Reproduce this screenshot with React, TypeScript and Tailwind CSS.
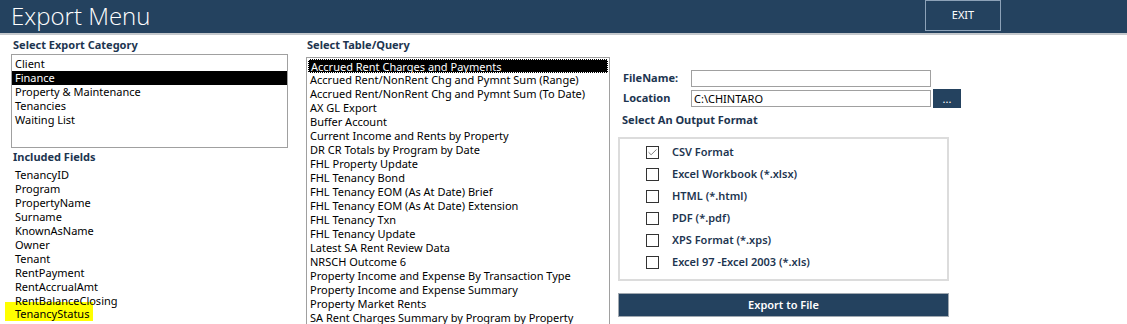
import { Check } from "lucide-react";

const categories = ["Client", "Finance", "Property & Maintenance", "Tenancies", "Waiting List"];

const fields = [
  "TenancyID",
  "Program",
  "PropertyName",
  "Surname",
  "KnownAsName",
  "Owner",
  "Tenant",
  "RentPayment",
  "RentAccrualAmt",
  "RentBalanceClosing",
];

const queries = [
  "Accrued Rent Charges and Payments",
  "Accrued Rent/NonRent Chg and Pymnt Sum (Range)",
  "Accrued Rent/NonRent Chg and Pymnt Sum (To Date)",
  "AX GL Export",
  "Buffer Account",
  "Current Income and Rents by Property",
  "DR CR Totals by Program by Date",
  "FHL Property Update",
  "FHL Tenancy Bond",
  "FHL Tenancy EOM (As At Date) Brief",
  "FHL Tenancy EOM (As At Date) Extension",
  "FHL Tenancy Txn",
  "FHL Tenancy Update",
  "Latest SA Rent Review Data",
  "NRSCH Outcome 6",
  "Property Income and Expense By Transaction Type",
  "Property Income and Expense Summary",
  "Property Market Rents",
  "SA Rent Charges Summary by Program by Property",
];

const formats = [
  { label: "CSV Format", checked: true },
  { label: "Excel Workbook (*.xlsx)", checked: false },
  { label: "HTML (*.html)", checked: false },
  { label: "PDF (*.pdf)", checked: false },
  { label: "XPS Format (*.xps)", checked: false },
  { label: "Excel 97 -Excel 2003 (*.xls)", checked: false },
];

export default function App() {
  return (
    <div className="w-[1127px] h-[324px] overflow-hidden bg-white font-['Noto_Sans',sans-serif] text-[11px] text-black">
      {/* Header */}
      <div className="h-[35px] bg-[#24425f] border-b-2 border-[#c4c8cc] flex items-start justify-between">
        <div className="pl-[11px] pt-[1px] text-[24px] leading-[30px] text-white font-light font-['Open_Sans',sans-serif]">
          Export Menu
        </div>
        <button className="mr-[126px] w-[76px] h-[31px] border border-[#8da2b8] text-white text-[11px] flex items-center justify-center">
          EXIT
        </button>
      </div>

      <div className="flex">
        {/* Left column */}
        <div className="w-[306px] pl-[11px] flex flex-col">
          <div className="pt-[3px] pl-[2px] h-[19px] font-bold text-[#1d3550] leading-[14px]">Select Export Category</div>
          <div className="w-[277px] h-[94px] border border-[#a0a0a0] pt-[2px]">
            {categories.map((c) => (
              <div
                key={c}
                className={`h-[14px] leading-[14px] pl-[3px] ${c === "Finance" ? "bg-black text-white" : ""}`}
              >
                {c}
              </div>
            ))}
          </div>
          <div className="pt-[2px] pl-[2px] h-[20px] font-bold text-[#1d3550] leading-[14px]">Included Fields</div>
          <div className="flex flex-col">
            {fields.map((f) => (
              <div key={f} className="relative z-10 h-[14px] leading-[14px] pl-[4px]">
                {f}
              </div>
            ))}
            <div className="-ml-[6px] -mt-[6px] w-[88px] h-[19px] bg-[#ffff00] pl-[10px] pt-[5px] leading-[14px]">
              TenancyStatus
            </div>
          </div>
        </div>

        {/* Middle column */}
        <div className="w-[312px] flex flex-col">
          <div className="pt-[3px] pl-[1px] h-[22px] font-bold text-[#1d3550] leading-[14px]">Select Table/Query</div>
          <div className="w-[304px] h-[280px] border border-[#a0a0a0] border-b-0 pt-[1px] px-[1px]">
            {queries.map((q, i) => (
              <div
                key={q}
                className={`h-[14px] leading-[14px] pl-[2px] ${i === 0 ? "bg-black text-white border border-dotted border-white leading-[12px]" : ""}`}
              >
                {q}
              </div>
            ))}
          </div>
        </div>

        {/* Right column */}
        <div className="flex flex-col pt-[34px]">
          <div className="flex items-center h-[18px] ml-[5px]">
            <div className="w-[68px] font-bold text-[#1d3550]">FileName:</div>
            <div className="w-[240px] h-[17px] border border-[#a0a0a0]" />
          </div>
          <div className="flex items-center h-[20px] ml-[5px] mt-[1px]">
            <div className="w-[68px] font-bold text-[#1d3550]">Location</div>
            <div className="w-[240px] h-[17px] border border-[#a0a0a0] pl-[2px] leading-[15px]">C:\CHINTARO</div>
            <button className="ml-[2px] w-[28px] h-[19px] bg-[#24425f] text-white text-[11px] leading-[19px]">...</button>
          </div>
          <div className="ml-[4px] mt-[4px] h-[18px] font-bold text-[#1d3550]">Select An Output Format</div>
          <div className="mt-[7px] w-[331px] h-[144px] border-2 border-[#dcdcdc] pt-[7px] pl-[26px] flex flex-col gap-[9px]">
            {formats.map((f) => (
              <div key={f.label} className="flex items-center h-[13px]">
                <div className="w-[13px] h-[13px] border border-[#333] flex items-center justify-center bg-white">
                  {f.checked && <Check size={11} strokeWidth={1.5} className="text-[#444]" />}
                </div>
                <div className="ml-[13px] font-semibold text-[#1d3550]">{f.label}</div>
              </div>
            ))}
          </div>
          <button className="mt-[12px] w-[331px] h-[24px] bg-[#24425f] border border-[#a0a8b0] text-white font-semibold text-[11px]">
            Export to File
          </button>
        </div>
      </div>
    </div>
  );
}
